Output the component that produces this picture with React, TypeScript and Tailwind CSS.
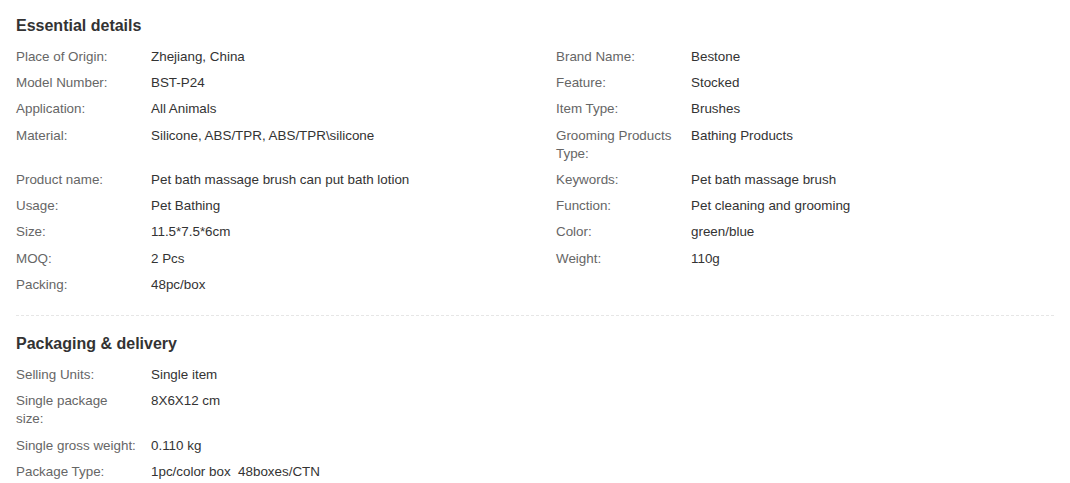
import React from "react";

type Pair = [string, string];

const essential: [Pair, Pair | null][] = [
  [["Place of Origin:", "Zhejiang, China"], ["Brand Name:", "Bestone"]],
  [["Model Number:", "BST-P24"], ["Feature:", "Stocked"]],
  [["Application:", "All Animals"], ["Item Type:", "Brushes"]],
  [["Material:", "Silicone, ABS/TPR, ABS/TPR\\silicone"], ["Grooming Products Type:", "Bathing Products"]],
  [["Product name:", "Pet bath massage brush can put bath lotion"], ["Keywords:", "Pet bath massage brush"]],
  [["Usage:", "Pet Bathing"], ["Function:", "Pet cleaning and grooming"]],
  [["Size:", "11.5*7.5*6cm"], ["Color:", "green/blue"]],
  [["MOQ:", "2 Pcs"], ["Weight:", "110g"]],
  [["Packing:", "48pc/box"], null],
];

const packaging: Pair[] = [
  ["Selling Units:", "Single item"],
  ["Single package size:", "8X6X12 cm"],
  ["Single gross weight:", "0.110 kg"],
  ["Package Type:", "1pc/color box\u00a0 48boxes/CTN"],
];

function Cell({ pair, wide }: { pair: Pair; wide?: boolean }) {
  return (
    <div className={wide ? "flex w-[540px] shrink-0" : "flex flex-1"}>
      <div className="w-[135px] shrink-0 pr-[14px] text-[#666]">{pair[0]}</div>
      <div className="flex-1 text-[#333]">{pair[1]}</div>
    </div>
  );
}

export default function App() {
  return (
    <div className="w-[1070px] min-h-[483px] bg-white font-['Liberation_Sans'] text-[13.4px] leading-[18.2px]">
      <div className="px-4 pt-[15px] pb-[17px]">
        <h3 className="text-[16px] font-bold leading-[22px] text-[#333] mb-[7px]">Essential details</h3>
        <div className="flex flex-col">
          {essential.map(([a, b], i) => (
            <div key={i} className="flex py-1">
              <Cell pair={a} wide />
              {b ? <Cell pair={b} /> : <div className="flex-1" />}
            </div>
          ))}
        </div>
      </div>
      <div className="mx-4 border-t border-dashed border-[#e6e6e6]" />
      <div className="px-4 pt-[17px]">
        <h3 className="text-[16px] font-bold leading-[22px] text-[#333] mb-[7px]">Packaging &amp; delivery</h3>
        <div className="flex flex-col">
          {packaging.map((p, i) => (
            <div key={i} className="flex py-1">
              <Cell pair={p} wide />
            </div>
          ))}
        </div>
      </div>
    </div>
  );
}
